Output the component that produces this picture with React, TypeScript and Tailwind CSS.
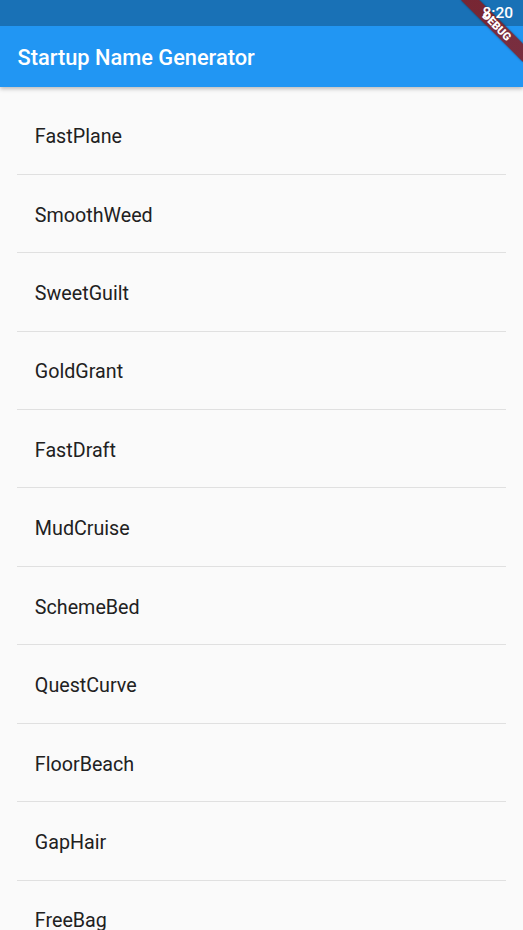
import React from "react";

const names = [
  "FastPlane",
  "SmoothWeed",
  "SweetGuilt",
  "GoldGrant",
  "FastDraft",
  "MudCruise",
  "SchemeBed",
  "QuestCurve",
  "FloorBeach",
  "GapHair",
  "FreeBag",
  "WildStar",
];

export default function App() {
  return (
    <div
      className="relative w-[523px] h-[930px] overflow-hidden bg-[#fafafa]"
      style={{ fontFamily: "Roboto, 'Noto Sans', sans-serif" }}
    >
      {/* status bar */}
      <div className="relative z-30 h-[26.15px] bg-[#1971b6]" />
      {/* app bar */}
      <div className="relative z-20 h-[61px] bg-[#2196f3] flex items-center pl-[17.5px] shadow-[0_2px_4px_rgba(0,0,0,0.25)]">
        <span className="text-white text-[21.8px] font-medium leading-none mt-[2px]">Startup Name Generator</span>
      </div>
      {/* list */}
      <div className="px-[17.43px] pt-[17.43px]">
        {names.map((n, i) => (
          <div key={n}>
            {i > 0 && (
              <div className="h-[17.43px] flex items-center">
                <div className="h-px w-full bg-[#e0e0e0]" />
              </div>
            )}
            <div className="h-[61px] flex items-center pl-[17.43px]">
              <span className="text-[19.7px] text-[#212121] leading-none mt-[4px]">{n}</span>
            </div>
          </div>
        ))}
      </div>
      {/* debug banner */}
      <div className="absolute left-[453.2px] top-[19.66px] w-[87.16px] h-[13.07px] rotate-45 z-40 bg-black/50 bg-[linear-gradient(rgba(183,28,28,0.627),rgba(183,28,28,0.627))] shadow-[0_0_2px_rgba(0,0,0,0.5)] flex items-center justify-center">
        <span className="text-white text-[11.1px] font-black leading-none tracking-normal">DEBUG</span>
      </div>
      {/* status bar time (drawn over banner) */}
      <div className="absolute top-0 right-[10px] h-[26.15px] z-50 flex items-center">
        <span className="text-white text-[15.5px] font-medium leading-none mt-[1px]">8:20</span>
      </div>
    </div>
  );
}
